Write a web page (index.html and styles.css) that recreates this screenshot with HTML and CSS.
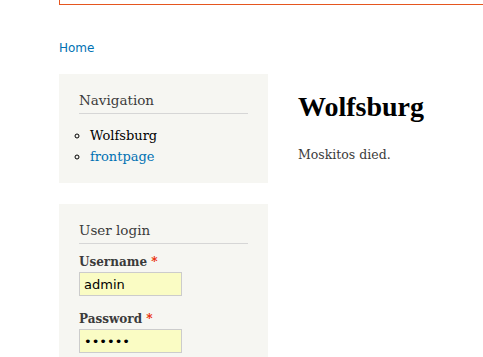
FILE: index.html
```html
<!DOCTYPE html>
<html lang="en">
<head>
  <meta charset="UTF-8">
  <meta name="viewport" content="width=device-width, initial-scale=1.0">
  <title>Wolfsburg</title>
  <link rel="stylesheet" href="styles.css">
</head>
<body>
  <div class="page">
    <div class="messages"></div>
    <div class="breadcrumb"><a href="#">Home</a></div>
    <div class="layout">
      <aside class="sidebar">
        <div class="block">
          <h2>Navigation</h2>
          <ul class="menu">
            <li>Wolfsburg</li>
            <li><a href="#">frontpage</a></li>
          </ul>
        </div>
        <div class="block">
          <h2>User login</h2>
          <form class="login-form">
            <div class="form-item">
              <label for="name">Username <span class="required">*</span></label>
              <input type="text" id="name" value="admin">
            </div>
            <div class="form-item">
              <label for="pass">Password <span class="required">*</span></label>
              <input type="password" id="pass" value="secret">
            </div>
          </form>
        </div>
      </aside>
      <main class="content">
        <h1>Wolfsburg</h1>
        <p>Moskitos died.</p>
      </main>
    </div>
  </div>
</body>
</html>
```

FILE: styles.css
```css
body {
  margin: 0;
  padding: 0;
  background-color: #fff;
  font-family: "DejaVu Serif", Georgia, serif;
  color: #3b3b3b;
}

a {
  color: #0071b3;
  text-decoration: none;
}

.page {
  padding-left: 59px;
}

.messages {
  height: 4px;
  border-left: 1px solid #e5561f;
  border-bottom: 1px solid #e5561f;
}

.breadcrumb {
  margin-top: 35px;
  font-family: "DejaVu Sans", sans-serif;
  font-size: 12px;
  line-height: 16px;
}

.layout {
  display: flex;
  margin-top: 18px;
}

.sidebar {
  width: 209px;
  flex-shrink: 0;
}

.block {
  background-color: #f6f6f2;
  padding: 17px 20px 16px 20px;
  margin-bottom: 21px;
}

.block h2 {
  margin: 0 0 9px 0;
  padding-bottom: 4px;
  border-bottom: 1px solid #d6d6d6;
  font-weight: normal;
  font-size: 13.5px;
  line-height: 18px;
}

.menu {
  margin: 0;
  padding: 2px 0 0 11px;
  list-style: circle;
  font-size: 13px;
  line-height: 21px;
  color: #000;
}

.login-form {
  padding-top: 1px;
}

.form-item {
  margin-bottom: 15px;
}

.form-item label {
  display: block;
  font-weight: bold;
  font-size: 12px;
  line-height: 16px;
  margin-bottom: 2px;
}

.required {
  color: #ea2800;
}

.form-item input {
  width: 93px;
  height: 20px;
  padding: 1px 4px;
  border: 1px solid #ccc;
  background-color: #fafcc4;
  font-family: "DejaVu Sans", sans-serif;
  font-size: 13px;
  color: #000;
}

.content {
  margin-left: 30px;
}

.content h1 {
  margin: 15px 0 21px 0;
  font-family: "Liberation Serif", "Times New Roman", serif;
  font-size: 28px;
  line-height: 36px;
  font-weight: bold;
  color: #000;
}

.content p {
  margin: 0;
  font-size: 12.5px;
  line-height: 18px;
}
```
